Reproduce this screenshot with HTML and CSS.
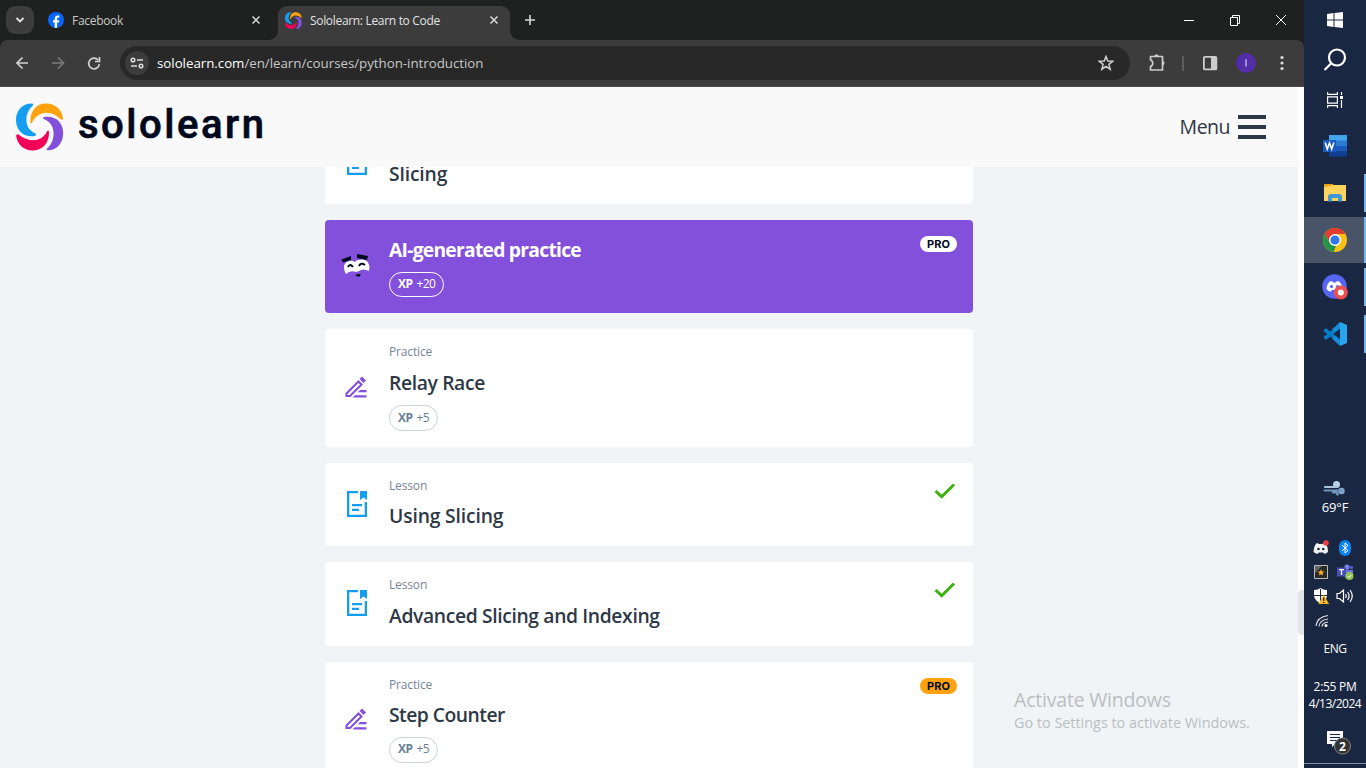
FILE: index.html
```html
<!DOCTYPE html>
<html lang="en">
<head>
<meta charset="utf-8">
<title>Sololearn: Learn to Code</title>
<link rel="stylesheet" href="styles.css">
</head>
<body>
<svg class="defs" width="0" height="0" aria-hidden="true">
  <symbol id="swirl" viewBox="0 0 48 48">
    <path fill="#149ef2" d="M16 .6C6 .6 0 8 0 17C0 27 7 34 17.500 33.300Q21.500 32.500 19.500 30.500C14 28 11 24 10.500 19C10 12 12 7 16.500 3Q18 1 16 .6Z"/>
    <path fill="#ffa20f" d="M14.300 19C14 8 20 .4 30 .4C39 .4 46 6.500 47 15Q47 17.500 45 16.500C38 10 31 8.500 25 11C20 13 17.500 16 16 20Q14.700 21 14.300 19Z"/>
    <path fill="#8350dc" d="M28 14C39 12 47.200 19 47.200 30C47.200 40 41 47.300 32 47.300Q29.500 47 31.500 45C36 41 38 35 37.500 29C37 22 33 18 28 16.200Q26 15 28 14Z"/>
    <path fill="#f40058" d="M33 29C33.500 39 27 47.500 17 47.500C8 47.500 1.500 42 .2 33Q0 30.500 2.500 31.500C9 36.500 16 38.500 22 36.500C26 35 29 32.500 31 28.500Q32.500 26.500 33 29Z"/>
  </symbol>
  <symbol id="lesson" viewBox="0 0 20 26">
    <path fill="none" stroke="#149ef2" stroke-width="2.300" d="M11 1.150H1.150V24.850H18.850V11"/>
    <path fill="#149ef2" d="M13 0H20V9L16.500 6.500L13 9ZM5 13H15V15.300H5ZM5 17.700H12V20H5Z"/>
  </symbol>
  <symbol id="pencil" viewBox="0 0 22 22">
    <path fill="none" stroke="#8350dc" stroke-width="2.100" d="M1.500 17.500L13.500 5.500L16.500 8.500L5 20H1.500Z"/>
    <path fill="#8350dc" d="M14.500 3L17 .5L21 4.500L18.500 7ZM15 14H21.500V16.300H12.700ZM9.800 19.200H21.500V21.500H7.500Z"/>
  </symbol>
  <symbol id="check" viewBox="0 0 22 16"><path d="M1.500 8L7.700 13.700L20 1.500" fill="none" stroke="#3db10d" stroke-width="3"/></symbol>
  <symbol id="close" viewBox="0 0 10 10"><path d="M1.500 1.500L8.500 8.500M8.500 1.500L1.500 8.500" stroke="currentColor" stroke-width="1.500"/></symbol>
</svg>
<div class="screen">
  <div class="browser">
    <div class="tabs">
      <div class="tab-search"><svg width="10" height="8" viewBox="0 0 10 8"><path d="M1.500 2L5 5.500L8.500 2" fill="none" stroke="#e3e3e3" stroke-width="1.800"/></svg></div>
      <div class="tab">
        <svg width="16" height="16" viewBox="0 0 16 16"><circle cx="8" cy="8" r="8" fill="#0866ff"/><path d="M6.700 16V10.600H5V8.200H6.700V7C6.700 4.500 7.800 3.400 10 3.400L11.300 3.600V5.600H10.300C9.300 5.600 9.100 6.100 9.100 7V8.200H11.200L10.800 10.600H9.100V16Z" fill="#fff"/></svg>
        <span class="fb">Facebook</span><svg class="x" width="10" height="10"><use href="#close"/></svg>
      </div>
      <div class="tab active">
        <svg width="17" height="17"><use href="#swirl"/></svg>
        <span class="so">Sololearn: Learn to Code</span><svg class="x" width="10" height="10"><use href="#close"/></svg>
      </div>
      <svg class="plus" width="12" height="12" viewBox="0 0 12 12"><path d="M6 1V11M1 6H11" stroke="#d8d8d8" stroke-width="1.600"/></svg>
      <svg class="winctl" width="104" height="12" viewBox="0 0 104 12" fill="none" stroke="#fff">
        <path d="M0 6.500H10M46.500 4V11.500H53.500V3.500H46.500ZM48.500 3.500V1.500H55.500V9.500H53.500M92 1L102 11M102 1L92 11"/>
      </svg>
    </div>
    <div class="toolbar">
      <svg class="nav" width="90" height="16" viewBox="0 0 90 16" fill="none" stroke="#d2d2d2" stroke-width="1.700">
        <path d="M13 8H2M7.500 2.500L2 8L7.500 13.500"/>
        <path stroke="#7b7b7b" d="M37 8H48.500M43 2.500L48.500 8L43 13.500"/>
        <path d="M83 5A5.300 5.300 0 1 0 84.300 9M84.500 2V6.500H80"/>
      </svg>
      <div class="omnibox">
        <div class="site"><svg width="14" height="12" viewBox="0 0 14 12" fill="none" stroke="#dedede" stroke-width="1.500"><circle cx="3" cy="3" r="1.800"/><path d="M7 3H13M1 9H7"/><circle cx="11" cy="9" r="1.800"/></svg></div>
        <span class="url"><b>sololearn.com</b>/en/learn/courses/python-introduction</span>
        <svg class="star" width="16" height="16" viewBox="0 0 16 16"><path d="M8 1.500L9.800 6L14.800 6.300L10.900 9.400L12.200 14.200L8 11.500L3.800 14.200L5.100 9.400L1.200 6.300L6.200 6Z" fill="none" stroke="#d0d0d0" stroke-width="1.500"/></svg>
      </div>
      <svg class="tools" width="142" height="20" viewBox="0 0 142 20">
        <path d="M2.500 3.500H14.500V17H2.500V13.500C5.500 12.500 5.500 8 2.500 7Z" fill="none" stroke="#ccc" stroke-width="1.700" stroke-linejoin="round"/><path d="M6 3Q8.500-.5 11 3ZM15 7.500Q18 10 15 12.500Z" fill="#ccc"/>
        <path d="M35 3V18" stroke="#686868" stroke-width="1.500"/>
        <rect x="55.900" y="3.900" width="12.500" height="12.500" rx="1" fill="none" stroke="#ccc" stroke-width="1.800"/><path d="M63 4H69V17H63Z" fill="#ccc"/>
        <circle cx="98" cy="10" r="10" fill="#512da8"/><path d="M98 6.300V13.500" stroke="#cfc3ef" stroke-width="1.300"/>
        <g fill="#ddd"><circle cx="134" cy="4.500" r="1.600"/><circle cx="134" cy="10" r="1.600"/><circle cx="134" cy="15.500" r="1.600"/></g>
      </svg>
    </div>
    <div class="page">
      <div class="header">
        <svg class="logo" width="48" height="48"><use href="#swirl"/></svg>
        <svg class="wordmark" width="196" height="64" viewBox="0 0 196 64"><text x="0" y="43" textLength="186" lengthAdjust="spacing">sololearn</text></svg>
        <span class="menu">Menu</span><span class="burger"><i></i><i></i><i></i></span>
      </div>
      <div class="content">
        <div class="cards">
          <div class="card cut"><div class="ico"><svg width="20" height="26"><use href="#lesson"/></svg></div><div class="body"><h3 class="t4">Slicing</h3></div></div>
          <div class="card ai">
            <div class="ico"><svg width="30" height="26" viewBox="0 0 30 26">
              <path fill="#fff" d="M3 14C3 9 9 6 14 9C18 5 27 6 28 12C29 14 28 16 28 18Q22 15 18 18L15 19Q9 17 5 21Q3 18 3 14Z"/>
              <path fill="#00091e" d="M.5 6.500L10 3V7L2 9.500ZM16 1L27 3L26 7L16 5Z"/><path d="M7 14Q9 10 12 14M18 13Q20 9 24 12" fill="none" stroke="#00091e" stroke-width="2"/><path fill="#00091e" d="M14 21.500L20 21L18 24L15.500 23Z"/>
            </svg></div>
            <div class="body"><h3>AI-generated practice</h3><div class="xp"><b>XP</b> +20</div></div><span class="pro">PRO</span>
          </div>
          <div class="card tall"><div class="ico"><svg width="22" height="22"><use href="#pencil"/></svg></div><div class="body low"><p>Practice</p><h3 class="t3">Relay Race</h3><div class="xp"><b>XP</b> +5</div></div></div>
          <div class="card short"><div class="ico"><svg width="20" height="26"><use href="#lesson"/></svg></div><div class="body"><p>Lesson</p><h3 class="t4">Using Slicing</h3></div><svg class="done" width="22" height="16"><use href="#check"/></svg></div>
          <div class="card short"><div class="ico"><svg width="20" height="26"><use href="#lesson"/></svg></div><div class="body low"><p>Lesson</p><h3 class="t3">Advanced Slicing and Indexing</h3></div><svg class="done" width="22" height="16"><use href="#check"/></svg></div>
          <div class="card tall"><div class="ico"><svg width="22" height="22"><use href="#pencil"/></svg></div><div class="body"><p>Practice</p><h3>Step Counter</h3><div class="xp"><b>XP</b> +5</div></div><span class="pro gold">PRO</span></div>
        </div>
      </div>
      <div class="scroll"><div class="thumb"></div></div>
      <div class="watermark"><div class="w1">Activate Windows</div><div class="w2">Go to Settings to activate Windows.</div></div>
    </div>
  </div>
  <div class="taskbar">
    <div class="sys"><svg width="16" height="16" viewBox="0 0 16 16"><path fill="#fff" d="M0 2L6.500 1V7.500H0ZM7.500 .9L16 0V7.500H7.500ZM0 8.500H6.500V15L0 14ZM7.500 8.500H16V16L7.500 15Z"/></svg></div>
    <div class="sys"><svg width="24" height="24" viewBox="0 0 24 24" fill="none" stroke="#fff" stroke-width="2.200"><circle cx="14" cy="9.500" r="8"/><path d="M8 15.500L1.500 22"/></svg></div>
    <div class="sys"><svg width="16" height="16" viewBox="0 0 16 16" fill="none" stroke="#fff" stroke-width="1.200"><path d="M.6 0V2.400H10.400V0M.6 16V13.600H10.400V16M.6 4.800H10.400V11.200H.6ZM14.500 0V3M14.500 8V16"/><path fill="#fff" stroke="none" d="M13 4H16V7H13Z"/></svg></div>
    <div class="apps">
      <div class="app"><svg width="24" height="22" viewBox="0 0 24 22"><path fill="#41a5ee" d="M6 0H24V6H6Z"/><path fill="#2b7cd3" d="M6 5.500H24V11H6Z"/><path fill="#185abd" d="M6 11H24V16.500H6Z"/><path fill="#103f91" d="M6 16.500H24V21.500H6Z"/><path fill="#185abd" d="M0 5H13V17H0Z"/><path d="M2.200 7.500L4.300 14L6.500 8L8.700 14L10.800 7.500" fill="none" stroke="#fff" stroke-width="1.600"/></svg></div>
      <div class="app run"><svg width="22" height="20" viewBox="0 0 22 20"><path fill="#e8a20c" d="M0 1H9L10 4H0Z"/><path fill="#ffd35e" d="M0 4L10 2H22V18H0Z"/><path fill="#3f97d8" d="M4 18.500V12.500L6 11H16L18 12.500V18.500H14V15H8V18.500Z"/></svg></div>
      <div class="app run on"><svg width="24" height="24" viewBox="0 0 24 24"><circle cx="12" cy="12" r="12" fill="#fbc116"/><path fill="#e33b2e" d="M1.600 6A12 12 0 0 1 22.400 6H12L7 15Z"/><path fill="#229549" d="M1.600 6L7 15L13 18L10.500 23.900A12 12 0 0 1 1.600 6Z"/><circle cx="12" cy="12" r="6" fill="#fff"/><circle cx="12" cy="12" r="4.600" fill="#3078e8"/></svg></div>
      <div class="app run"><svg width="26" height="26" viewBox="0 0 26 26"><circle cx="12.500" cy="12.500" r="12.200" fill="#5865f2"/><path fill="#fff" d="M4.500 15C5 10 7 7 10 7L11 8.500H14L15 7C18 7 20 10 20.500 15Q18.500 17.500 16 17.500L15 16H10L9 17.500Q6 17.500 4.500 15Z"/><circle cx="9.500" cy="12.500" r="1.600" fill="#5865f2"/><circle cx="15.500" cy="12.500" r="1.600" fill="#5865f2"/><circle cx="18.800" cy="18.500" r="7" fill="#ed5050"/><circle cx="18.800" cy="18.500" r="3" fill="#fff"/></svg></div>
      <div class="app run"><svg width="24" height="24" viewBox="0 0 24 24"><path d="M1.500 7.500L17.500 20M1.500 16.500L17.500 4" stroke="#087bc5" stroke-width="4"/><path fill="#27a5ef" d="M17 0L24 3V21L17 24V6L16 5Z"/><path fill="#168dd8" d="M17 0V6L12 10L9 7.500ZM17 24V18L12 14L9 16.500Z"/></svg></div>
    </div>
    <div class="weather"><svg width="24" height="18" viewBox="0 0 24 18" fill="none" stroke-linecap="round" stroke-width="2.200"><circle cx="13.500" cy="5.500" r="3.500" fill="#b9d2e8"/><circle cx="18.500" cy="12" r="3.200" fill="#7fa6cb"/><path stroke="#a9c4df" d="M2 8H14"/><path stroke="#6f96bd" d="M1.500 11.500H19M10 13.500H14"/><circle cx="14.500" cy="15" r="1.500" fill="#6f96bd"/></svg><span>69°F</span></div>
    <div class="tray">
      <svg width="16" height="16" viewBox="0 0 16 16"><path fill="#f4f4f4" d="M.5 12Q1 5 4 3L6 4H9L12 3Q15 6 15 12L12 14L10 12.500H6L4 14Z"/><circle cx="5.500" cy="9" r="1.300" fill="#1a2742"/><circle cx="10.300" cy="9" r="1.300" fill="#1a2742"/><circle cx="13" cy="3" r="2.800" fill="#ed4245"/></svg>
      <svg width="16" height="16" viewBox="0 0 16 16"><rect x="2" width="12" height="16" rx="6" fill="#0a84ee"/><path d="M5 5L11 10.500L8 13V3L11 5.500L5 11" fill="none" stroke="#fff"/></svg>
      <svg width="16" height="16" viewBox="0 0 16 16"><path fill="#292929" stroke="#bbb" d="M1.500 1.500H14.500V14.500H1.500Z"/><path fill="#666" d="M2 2H9L2 9Z"/><path fill="#ffad1f" d="M8 5L9 7.500H11.500L9.500 9.200L10.200 11.600L8 10.300L5.800 11.600L6.500 9.200L4.500 7.500H7Z"/></svg>
      <svg width="18" height="16" viewBox="0 0 18 16"><circle cx="11" cy="3" r="2.600" fill="#7b83eb"/><circle cx="15.500" cy="3.500" r="1.700" fill="#5059c9"/><path fill="#6d75dd" d="M8 6H17V11Q14 15 9 14Z"/><path fill="#464eb8" d="M1 3.500H10V12.500H1Z"/><path stroke="#fff" stroke-width="1.300" d="M3 5.700H8M5.500 5.700V11"/><circle cx="13.500" cy="12" r="4" fill="#92c353"/><path d="M11.500 12L13 13.500L15.500 10.800" fill="none" stroke="#fff"/></svg>
      <svg width="16" height="16" viewBox="0 0 16 16"><path fill="#fff" d="M1 2Q5 2 7.500 0Q10 2 14 2V8Q13 13 7.500 15.500Q2 13 1 8Z"/><path stroke="#1a2742" d="M7.500 1V15M1 7.500H14"/><path fill="#ffb81c" d="M10.500 6.500L16 16H5.500Z"/><path stroke="#222" stroke-width="1.300" d="M10.700 9.500V13M10.700 14V15"/></svg>
      <svg width="18" height="16" viewBox="0 0 18 16" fill="none" stroke="#fff" stroke-width="1.200"><path d="M1 5.500H3.500L7.500 2V14L3.500 10.500H1ZM9.500 6Q11 8 9.500 10M11.700 4Q14.500 8 11.700 12M14 2Q18.500 8 14 14"/></svg>
      <svg width="16" height="16" viewBox="0 0 16 16" fill="none" stroke="#ddd" stroke-width="1.200"><path d="M3 14Q4 5 15 3.500M6 14.500Q6.500 8 15 7M9 14.500Q9.500 10.500 15 10"/><circle cx="13" cy="13.500" r="1.500" fill="#fff" stroke="none"/></svg>
    </div>
    <div class="eng">ENG</div>
    <div class="clock"><div>2:55 PM</div><div class="date">4/13/2024</div></div>
    <div class="note"><svg width="28" height="26" viewBox="0 0 28 26"><path fill="#fff" d="M1 1H17V14H9L6 17V14H1Z"/><path d="M4 4.500H14M4 7.500H14M4 10.500H11" stroke="#1a2742"/><circle cx="16.500" cy="16" r="8" fill="#333" stroke="#848484"/><text x="13.100" y="20.500">2</text></svg></div>
    <div class="edge"></div>
  </div>
</div>
</body>
</html>
```
FILE: styles.css
```css
* { box-sizing: border-box; }
body { margin: 0; width: 1366px; height: 768px; overflow: hidden; font-family: "Open Sans", "Noto Sans", sans-serif; }
h3, p { margin: 0; }
svg { display: block; flex: none; }
.defs { position: absolute; }
.screen { display: flex; height: 768px; }
.browser { width: 1304px; display: flex; flex-direction: column; background: #1f2020; }

.tabs { height: 40px; display: flex; align-items: center; background: #1f2120; padding-left: 6px; }
.tab-search { width: 28px; height: 28px; border-radius: 9px; background: #3c3c3c; display: grid; place-items: center; margin-right: 14px; }
.tab { display: flex; align-items: center; font-size: 12px; color: #c8c8c8; white-space: nowrap; width: 230px; height: 34px; }
.tab span { flex: 1; margin-left: 8px; }
.tab .x { color: #d8d8d8; margin-right: 17px; }
.tab.active { position: relative; align-self: flex-end; width: 232px; background: #3c3c3c; border-radius: 9px 9px 0 0; color: #e3e3e3; padding: 0 0 6px 7px; height: 34px; }
.tab.active .x { margin-right: 11px; }
.tab.active::before, .tab.active::after { content: ""; position: absolute; bottom: 0; width: 9px; height: 9px; }
.tab.active::before { left: -9px; background: radial-gradient(circle at 0 0, transparent 8.5px, #3c3c3c 9px); }
.tab.active::after { right: -9px; background: radial-gradient(circle at 100% 0, transparent 8.5px, #3c3c3c 9px); }
.fb { letter-spacing: -.3px; }
.so { letter-spacing: -.32px; }
.plus { margin-left: 14px; }
.winctl { margin-left: auto; margin-right: 16px; }

.toolbar { height: 47px; display: flex; align-items: center; background: #3c3c3c; border-radius: 8px 8px 0 0; border-bottom: 1px solid #4b4b4b; padding-left: 15px; }
.nav { margin-right: 15px; }
.omnibox { width: 1010px; height: 34px; border-radius: 17px; background: #282828; display: flex; align-items: center; padding: 0 16px 0 5px; }
.site { width: 24px; height: 24px; border-radius: 50%; background: #3c3c3c; display: grid; place-items: center; }
.url { margin-left: 8px; font-size: 13.300px; color: #c7c7c7; letter-spacing: -.02px; white-space: nowrap; }
.url b { font-weight: 400; color: #fff; }
.star { margin-left: auto; }
.tools { margin-left: 18px; }

.page { flex: 1; display: grid; grid-template: 80px 1fr / 1298px 6px; background: #f0f4f7; position: relative; overflow: hidden; }
.header { background: #f9f9f9; display: flex; align-items: center; padding: 0 32px 0 16px; }
.wordmark { margin-left: 14px; }
.wordmark text { font: 500 40px Roboto, sans-serif; fill: #00091e; stroke: #00091e; stroke-width: .7; stroke-linejoin: round; }
.menu { margin-left: auto; font-size: 19.500px; line-height: 26px; color: #2d3846; letter-spacing: -.5px; }
.burger { display: grid; gap: 6px; margin-left: 8px; }
.burger i { width: 28px; height: 4px; background: #2d3846; }
.content { grid-row: 2; display: flex; justify-content: center; overflow: hidden; }
.scroll { grid-column: 2; grid-row: 1 / 3; background: #fff; padding-top: 503px; }
.thumb { height: 45px; background: #dfe5e9; border-radius: 4px 0 0 4px; }

.cards { width: 648px; display: flex; flex-direction: column; gap: 16px; }
.card { flex: none; background: #fff; border-radius: 4px; display: flex; align-items: flex-start; padding: 16px 16px 0 0; }
.ico { width: 64px; align-self: stretch; display: grid; place-items: center; padding-bottom: 17px; }
.body { flex: 1; }
.card p { font-size: 12px; line-height: 14px; color: #768597; margin-bottom: 9px; letter-spacing: -.15px; }
.low p { margin-bottom: 10px; }
.card h3 { font-size: 19.300px; font-weight: 600; line-height: 28px; color: #2d3846; white-space: nowrap; letter-spacing: -.5px; }
.card .t3 { letter-spacing: -.36px; }
.card .t4 { letter-spacing: -.15px; }
.xp { display: inline-flex; gap: 4px; align-items: center; height: 26px; border: 1px solid #c8d2db; border-radius: 13px; padding: 0 8px 2px; font-size: 12px; color: #6b7f94; margin-top: 8px; letter-spacing: -.75px; }
.xp b { letter-spacing: -.5px; }
.tall { height: 118px; }
.tall .ico { padding-right: 2px; padding-bottom: 19px; }
.short { height: 83.250px; }
.cut { height: 37px; padding: 0; border-radius: 0 0 4px 4px; }
.cut .ico { align-self: flex-start; margin-top: -18px; padding: 0; }
.cut h3 { margin-top: -7px; }
.ai { height: 93px; background: #8350dc; }
.ai .ico { padding-right: 2px; }
.card.ai h3 { color: #fff; font-weight: 700; letter-spacing: -.75px; }
.ai .xp { color: #fff; border-color: #fff; height: 25px; letter-spacing: -.6px; }
.pro { width: 37px; height: 16px; border-radius: 8px; background: #fff; color: #00091e; font: 700 11px/16px Inter, sans-serif; text-align: center; }
.gold { background: #ffa20f; }
.done { margin: 4px 1px 0 0; }
.watermark { position: absolute; left: 1014px; top: 601px; color: #bbbec0; white-space: nowrap; }
.w1 { font-size: 19.500px; line-height: 24px; letter-spacing: -.2px; }
.w2 { font-size: 14.400px; line-height: 21px; }

.taskbar { width: 62px; background: #1a2742; display: flex; flex-direction: column; color: #fff; font-size: 12px; text-align: center; }
.sys { height: 40px; display: grid; place-items: center; }
.apps { margin-top: 3px; display: grid; gap: 1px; }
.app { height: 46px; display: grid; place-items: center; position: relative; }
.run::after { content: ""; position: absolute; right: 0; top: 4px; bottom: 4px; width: 2px; background: #76b9ed; }
.on { background: #4a5468; }
.on::after { top: 0; bottom: 0; }
.weather { margin-top: 122px; height: 38px; display: grid; justify-items: center; }
.weather span { font-size: 13px; line-height: 21px; letter-spacing: -.2px; }
.tray { display: grid; grid-template-columns: 24px 24px; grid-auto-rows: 24px; place-items: center; margin: 19px 0 0 5px; }
.eng { line-height: 16px; margin-top: 9px; letter-spacing: -.4px; }
.clock { margin-top: 21px; line-height: 17px; letter-spacing: -.3px; white-space: nowrap; }
.date { letter-spacing: -.5px; }
.note { margin: 18px 0 0 22px; }
.note text { font: 700 12px "Open Sans", sans-serif; fill: #fff; }
.edge { margin-top: auto; height: 1px; margin-bottom: 4px; background: #8490a5; }
```
